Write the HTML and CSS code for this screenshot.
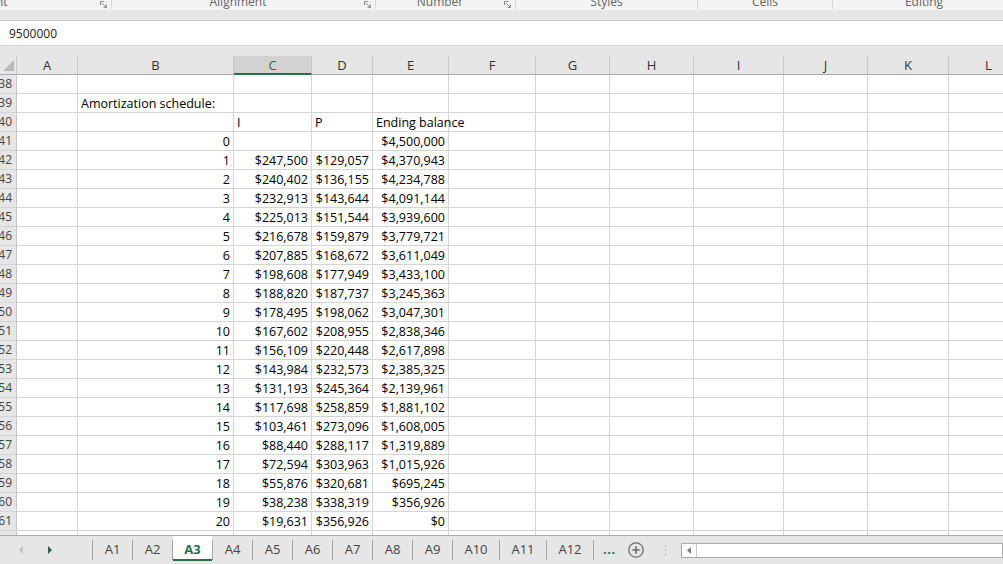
FILE: index.html
```html
<!DOCTYPE html>
<html>
<head>
<meta charset="utf-8">
<link rel="stylesheet" href="styles.css">
</head>
<body>
<div class="ribbon">
  <div class="grp g1"><span class="glabel">Font</span><svg class="launch" width="7" height="7" viewBox="0 0 7 7"><path d="M0.5 4V0.5H4M2 2L6 6M6.5 3.5V6.5H3.5" fill="none" stroke="#8a8a8a" stroke-width="1"/></svg></div>
  <div class="grp g2"><span class="glabel">Alignment</span><svg class="launch" width="7" height="7" viewBox="0 0 7 7"><path d="M0.5 4V0.5H4M2 2L6 6M6.5 3.5V6.5H3.5" fill="none" stroke="#8a8a8a" stroke-width="1"/></svg></div>
  <div class="grp g3"><span class="glabel">Number</span><svg class="launch" width="7" height="7" viewBox="0 0 7 7"><path d="M0.5 4V0.5H4M2 2L6 6M6.5 3.5V6.5H3.5" fill="none" stroke="#8a8a8a" stroke-width="1"/></svg></div>
  <div class="grp g4"><span class="glabel">Styles</span></div>
  <div class="grp g5"><span class="glabel">Cells</span></div>
  <div class="grp g6"><span class="glabel">Editing</span></div>
</div>
<div class="band"></div>
<div class="fbar">9500000</div>
<div class="gap"></div>
<div class="sheetwrap">
<div class="sheet">
<div class="corner"><svg width="16" height="18" viewBox="0 0 16 18"><polygon points="14,4 14,15 3,15" fill="#b9b9b9"/></svg></div><div class="ch">A</div><div class="ch">B</div><div class="ch sel">C</div><div class="ch">D</div><div class="ch">E</div><div class="ch">F</div><div class="ch">G</div><div class="ch">H</div><div class="ch">I</div><div class="ch">J</div><div class="ch">K</div><div class="ch">L</div>

<div class="rh"><span>38</span></div><div class="c"></div><div class="c"></div><div class="c"></div><div class="c"></div><div class="c"></div><div class="c"></div><div class="c"></div><div class="c"></div><div class="c"></div><div class="c"></div><div class="c"></div><div class="c"></div>
<div class="rh"><span>39</span></div><div class="c"></div><div class="c">Amortization schedule:</div><div class="c"></div><div class="c"></div><div class="c"></div><div class="c"></div><div class="c"></div><div class="c"></div><div class="c"></div><div class="c"></div><div class="c"></div><div class="c"></div>
<div class="rh"><span>40</span></div><div class="c"></div><div class="c"></div><div class="c">I</div><div class="c">P</div><div class="c">Ending balance</div><div class="c"></div><div class="c"></div><div class="c"></div><div class="c"></div><div class="c"></div><div class="c"></div><div class="c"></div>
<div class="rh"><span>41</span></div><div class="c"></div><div class="c n">0</div><div class="c n"></div><div class="c n"></div><div class="c n">$4,500,000</div><div class="c"></div><div class="c"></div><div class="c"></div><div class="c"></div><div class="c"></div><div class="c"></div><div class="c"></div>
<div class="rh"><span>42</span></div><div class="c"></div><div class="c n">1</div><div class="c n">$247,500</div><div class="c n">$129,057</div><div class="c n">$4,370,943</div><div class="c"></div><div class="c"></div><div class="c"></div><div class="c"></div><div class="c"></div><div class="c"></div><div class="c"></div>
<div class="rh"><span>43</span></div><div class="c"></div><div class="c n">2</div><div class="c n">$240,402</div><div class="c n">$136,155</div><div class="c n">$4,234,788</div><div class="c"></div><div class="c"></div><div class="c"></div><div class="c"></div><div class="c"></div><div class="c"></div><div class="c"></div>
<div class="rh"><span>44</span></div><div class="c"></div><div class="c n">3</div><div class="c n">$232,913</div><div class="c n">$143,644</div><div class="c n">$4,091,144</div><div class="c"></div><div class="c"></div><div class="c"></div><div class="c"></div><div class="c"></div><div class="c"></div><div class="c"></div>
<div class="rh"><span>45</span></div><div class="c"></div><div class="c n">4</div><div class="c n">$225,013</div><div class="c n">$151,544</div><div class="c n">$3,939,600</div><div class="c"></div><div class="c"></div><div class="c"></div><div class="c"></div><div class="c"></div><div class="c"></div><div class="c"></div>
<div class="rh"><span>46</span></div><div class="c"></div><div class="c n">5</div><div class="c n">$216,678</div><div class="c n">$159,879</div><div class="c n">$3,779,721</div><div class="c"></div><div class="c"></div><div class="c"></div><div class="c"></div><div class="c"></div><div class="c"></div><div class="c"></div>
<div class="rh"><span>47</span></div><div class="c"></div><div class="c n">6</div><div class="c n">$207,885</div><div class="c n">$168,672</div><div class="c n">$3,611,049</div><div class="c"></div><div class="c"></div><div class="c"></div><div class="c"></div><div class="c"></div><div class="c"></div><div class="c"></div>
<div class="rh"><span>48</span></div><div class="c"></div><div class="c n">7</div><div class="c n">$198,608</div><div class="c n">$177,949</div><div class="c n">$3,433,100</div><div class="c"></div><div class="c"></div><div class="c"></div><div class="c"></div><div class="c"></div><div class="c"></div><div class="c"></div>
<div class="rh"><span>49</span></div><div class="c"></div><div class="c n">8</div><div class="c n">$188,820</div><div class="c n">$187,737</div><div class="c n">$3,245,363</div><div class="c"></div><div class="c"></div><div class="c"></div><div class="c"></div><div class="c"></div><div class="c"></div><div class="c"></div>
<div class="rh"><span>50</span></div><div class="c"></div><div class="c n">9</div><div class="c n">$178,495</div><div class="c n">$198,062</div><div class="c n">$3,047,301</div><div class="c"></div><div class="c"></div><div class="c"></div><div class="c"></div><div class="c"></div><div class="c"></div><div class="c"></div>
<div class="rh"><span>51</span></div><div class="c"></div><div class="c n">10</div><div class="c n">$167,602</div><div class="c n">$208,955</div><div class="c n">$2,838,346</div><div class="c"></div><div class="c"></div><div class="c"></div><div class="c"></div><div class="c"></div><div class="c"></div><div class="c"></div>
<div class="rh"><span>52</span></div><div class="c"></div><div class="c n">11</div><div class="c n">$156,109</div><div class="c n">$220,448</div><div class="c n">$2,617,898</div><div class="c"></div><div class="c"></div><div class="c"></div><div class="c"></div><div class="c"></div><div class="c"></div><div class="c"></div>
<div class="rh"><span>53</span></div><div class="c"></div><div class="c n">12</div><div class="c n">$143,984</div><div class="c n">$232,573</div><div class="c n">$2,385,325</div><div class="c"></div><div class="c"></div><div class="c"></div><div class="c"></div><div class="c"></div><div class="c"></div><div class="c"></div>
<div class="rh"><span>54</span></div><div class="c"></div><div class="c n">13</div><div class="c n">$131,193</div><div class="c n">$245,364</div><div class="c n">$2,139,961</div><div class="c"></div><div class="c"></div><div class="c"></div><div class="c"></div><div class="c"></div><div class="c"></div><div class="c"></div>
<div class="rh"><span>55</span></div><div class="c"></div><div class="c n">14</div><div class="c n">$117,698</div><div class="c n">$258,859</div><div class="c n">$1,881,102</div><div class="c"></div><div class="c"></div><div class="c"></div><div class="c"></div><div class="c"></div><div class="c"></div><div class="c"></div>
<div class="rh"><span>56</span></div><div class="c"></div><div class="c n">15</div><div class="c n">$103,461</div><div class="c n">$273,096</div><div class="c n">$1,608,005</div><div class="c"></div><div class="c"></div><div class="c"></div><div class="c"></div><div class="c"></div><div class="c"></div><div class="c"></div>
<div class="rh"><span>57</span></div><div class="c"></div><div class="c n">16</div><div class="c n">$88,440</div><div class="c n">$288,117</div><div class="c n">$1,319,889</div><div class="c"></div><div class="c"></div><div class="c"></div><div class="c"></div><div class="c"></div><div class="c"></div><div class="c"></div>
<div class="rh"><span>58</span></div><div class="c"></div><div class="c n">17</div><div class="c n">$72,594</div><div class="c n">$303,963</div><div class="c n">$1,015,926</div><div class="c"></div><div class="c"></div><div class="c"></div><div class="c"></div><div class="c"></div><div class="c"></div><div class="c"></div>
<div class="rh"><span>59</span></div><div class="c"></div><div class="c n">18</div><div class="c n">$55,876</div><div class="c n">$320,681</div><div class="c n">$695,245</div><div class="c"></div><div class="c"></div><div class="c"></div><div class="c"></div><div class="c"></div><div class="c"></div><div class="c"></div>
<div class="rh"><span>60</span></div><div class="c"></div><div class="c n">19</div><div class="c n">$38,238</div><div class="c n">$338,319</div><div class="c n">$356,926</div><div class="c"></div><div class="c"></div><div class="c"></div><div class="c"></div><div class="c"></div><div class="c"></div><div class="c"></div>
<div class="rh"><span>61</span></div><div class="c"></div><div class="c n">20</div><div class="c n">$19,631</div><div class="c n">$356,926</div><div class="c n">$0</div><div class="c"></div><div class="c"></div><div class="c"></div><div class="c"></div><div class="c"></div><div class="c"></div><div class="c"></div>
<div class="rh"><span>62</span></div><div class="c"></div><div class="c"></div><div class="c"></div><div class="c"></div><div class="c"></div><div class="c"></div><div class="c"></div><div class="c"></div><div class="c"></div><div class="c"></div><div class="c"></div><div class="c"></div>
</div>
</div>
<div class="tabbar">
  <div class="nav">
    <svg class="arr-l" width="4" height="8" viewBox="0 0 4 8"><polygon points="4,0 4,8 0,4" fill="#c4c4c4"/></svg>
    <svg class="arr-r" width="4" height="8" viewBox="0 0 4 8"><polygon points="0,0 4,4 0,8" fill="#1e6b3c"/></svg>
  </div>
  <span class="sep"></span>
  <div class="tab">A1</div><span class="sep"></span>
  <div class="tab">A2</div><span class="sep"></span>
  <div class="tab active">A3</div><span class="sep"></span>
  <div class="tab">A4</div><span class="sep"></span>
  <div class="tab">A5</div><span class="sep"></span>
  <div class="tab">A6</div><span class="sep"></span>
  <div class="tab">A7</div><span class="sep"></span>
  <div class="tab">A8</div><span class="sep"></span>
  <div class="tab">A9</div><span class="sep"></span>
  <div class="tab wide">A10</div><span class="sep"></span>
  <div class="tab wide">A11</div><span class="sep"></span>
  <div class="tab wide">A12</div><span class="sep"></span>
  <div class="more">...</div>
  <svg class="add" width="16" height="16" viewBox="0 0 16 16"><circle cx="8" cy="8" r="7.2" fill="none" stroke="#6e6e6e" stroke-width="1.3"/><path d="M8 4.3V11.7M4.3 8H11.7" stroke="#6e6e6e" stroke-width="1.6"/></svg>
  <svg class="vdots" width="3" height="12" viewBox="0 0 3 12"><circle cx="1.5" cy="1.5" r="1" fill="#c2c2c2"/><circle cx="1.5" cy="6" r="1" fill="#c2c2c2"/><circle cx="1.5" cy="10.5" r="1" fill="#c2c2c2"/></svg>
  <div class="hscroll">
    <div class="hbtn"><svg width="4" height="7" viewBox="0 0 4 7"><polygon points="4,0 4,7 0,3.5" fill="#7a7a7a"/></svg></div>
    <div class="hthumb"></div>
  </div>
</div>
</body>
</html>
```

FILE: styles.css
```css
* { box-sizing: border-box; }

body {
  margin: 0;
  width: 1003px;
  height: 564px;
  overflow: hidden;
  background: #e6e6e6;
  font-family: "Open Sans", "Liberation Sans", sans-serif;
}

/* ribbon group labels (bottom sliver) */
.ribbon {
  height: 10px;
  background: #f3f3f3;
  display: flex;
  overflow: hidden;
}
.grp {
  flex: none;
  height: 9px;
  display: flex;
  align-items: flex-start;
  border-right: 1px solid #d6d6d6;
}
.glabel {
  flex: 1;
  text-align: center;
  font-size: 12px;
  line-height: 16px;
  margin-top: -6px;
  color: #666;
  white-space: nowrap;
}
.launch { flex: none; margin: 1px 4px 0 0; }
.g1 { width: 222px; margin-left: -110px; }
.g2 { width: 264px; }
.g3 { width: 140px; }
.g4 { width: 182px; }
.g5 { width: 135px; }
.g6 { width: 182px; border-right: none; }

.band {
  height: 11px;
  background: #e6e6e6;
  border-bottom: 1px solid #c6c6c6;
}
.fbar {
  height: 25px;
  background: #fff;
  border-bottom: 1px solid #d4d4d4;
  padding-left: 9px;
  font-size: 12px;
  line-height: 25px;
  color: #222;
}
.gap { height: 10px; background: #e6e6e6; }

/* sheet */
.sheetwrap {
  height: 479px;
  overflow: hidden;
  background: #fff;
}
.sheet {
  display: grid;
  width: max-content;
  grid-template-columns: 17px 61px 156px 78px 61px 76px 87px 74px 84px 90px 84px 81px 80px;
  grid-auto-rows: 19px;
}
.corner {
  background: #e6e6e6;
  border-right: 1px solid #c8c8c8;
  border-bottom: 1px solid #ababab;
}
.corner svg { display: block; }
.ch {
  background: #e6e6e6;
  border-right: 1px solid #c8c8c8;
  border-bottom: 1px solid #ababab;
  text-align: center;
  font-size: 13px;
  line-height: 18px;
  color: #333;
}
.ch.sel {
  background: #d2d2d2;
  color: #217346;
  border-bottom: 2px solid #217346;
}
.rh {
  background: #e6e6e6;
  border-right: 1px solid #c6c6c6;
  border-bottom: 1px solid #d4d4d4;
  display: flex;
  justify-content: flex-end;
  overflow: hidden;
  padding-right: 4px;
  font-size: 12px;
  line-height: 18px;
  color: #444;
  white-space: nowrap;
}
.c {
  border-right: 1px solid #d4d4d4;
  border-bottom: 1px solid #d4d4d4;
  padding: 0 3px;
  font-size: 12.5px;
  line-height: 19px;
  color: #000;
  white-space: nowrap;
}
.c.n { text-align: right; }

/* sheet tabs */
.tabbar {
  height: 29px;
  border-top: 1px solid #ababab;
  background: #e6e6e6;
  display: flex;
  align-items: flex-start;
}
.nav {
  width: 92px;
  height: 28px;
  display: flex;
  align-items: center;
  padding-left: 19px;
}
.arr-r { margin-left: 25px; }
.sep {
  flex: none;
  width: 1px;
  height: 20px;
  margin-top: 4px;
  background: #a6a6a6;
}
.tab {
  flex: none;
  width: 39px;
  height: 28px;
  text-align: center;
  font-size: 13px;
  line-height: 26px;
  color: #444;
}
.tab.wide { width: 46px; }
.tab.active {
  height: 25px;
  background: #fff;
  color: #217346;
  font-weight: bold;
  border-bottom: 2px solid #217346;
}
.more {
  margin-left: 9px;
  font-size: 13px;
  font-weight: bold;
  line-height: 26px;
  color: #217346;
  letter-spacing: 0.5px;
}
.add { margin: 6px 0 0 12px; flex: none; }
.vdots { margin: 8px 0 0 20px; flex: none; }
.hscroll {
  flex: 1;
  margin: 7px 0 0 14px;
  height: 15px;
  border: 1px solid #ababab;
  background: #fff;
  display: flex;
}
.hbtn {
  width: 15px;
  display: flex;
  align-items: center;
  justify-content: center;
  border-right: 1px solid #c6c6c6;
  background: #fff;
}
.hthumb { flex: 1; background: #fff; }
```
